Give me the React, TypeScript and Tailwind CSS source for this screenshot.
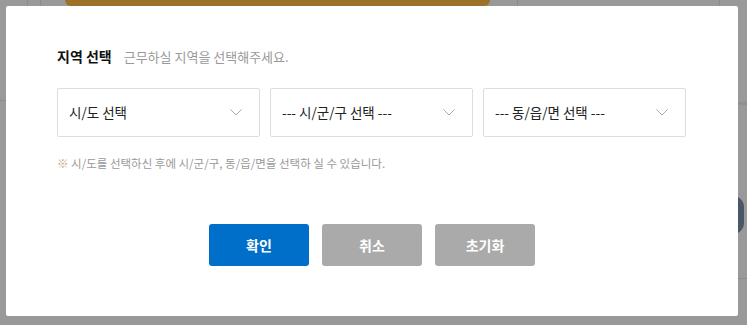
import React from "react";

const FONT = { fontFamily: '"Noto Sans CJK KR", "Noto Sans", sans-serif' };

function Chevron() {
  return (
    <svg width="12" height="7" viewBox="0 0 12 7" fill="none" className="shrink-0">
      <path d="M0.5 0.5 L6 6 L11.5 0.5" stroke="#aaaaaa" strokeWidth="1" />
    </svg>
  );
}

function SelectBox({ label }: { label: string }) {
  return (
    <div className="flex h-[49px] w-[203px] items-center justify-between rounded-[2px] border border-[#dddddd] bg-white pl-[11px] pr-[17px]">
      <span className="text-[13.5px] text-[#222222]">{label}</span>
      <Chevron />
    </div>
  );
}

export default function App() {
  return (
    <div
      className="relative h-[325px] w-[747px] overflow-hidden bg-[#999999]"
      style={FONT}
    >
      {/* 배경 페이지 (오버레이 아래) */}
      <div className="pointer-events-none absolute inset-0" aria-hidden>
        <div className="absolute left-[65px] top-0 h-[6px] w-[425px] rounded-b-[6px] bg-[#9c7228]" />
        <div className="absolute left-[27px] top-0 h-[6px] w-px bg-[#8c8c8c]" />
        <div className="absolute left-[40px] top-0 h-[6px] w-px bg-[#8c8c8c]" />
        <div className="absolute left-[517px] top-0 h-[6px] w-px bg-[#8c8c8c]" />
        <div className="absolute left-[719px] top-0 h-[6px] w-px bg-[#8c8c8c]" />
        <div className="absolute left-0 top-[100px] h-px w-[6px] bg-[#8c8c8c]" />
        <div className="absolute right-0 top-[102px] h-[3px] w-[9px] bg-[#8f8f8f]" />
        <div className="absolute right-0 top-[278px] h-px w-[9px] bg-[#8c8c8c]" />
        <div className="absolute left-[722px] top-[196px] h-[38px] w-[22px] rounded-full bg-[#4a5568]" />
      </div>

      {/* 모달 */}
      <div className="relative ml-[6px] mt-[6px] flex h-[310px] w-[732px] flex-col rounded-[2px] bg-white px-[51px] pt-[40px]">
        <div className="flex items-baseline gap-[12px]">
          <span className="text-[14px] font-bold text-[#111111]">지역 선택</span>
          <span className="text-[13px] text-[#999999]">근무하실 지역을 선택해주세요.</span>
        </div>

        <div className="mt-[21px] flex gap-[10px]">
          <SelectBox label="시/도 선택" />
          <SelectBox label="--- 시/군/구 선택 ---" />
          <SelectBox label="--- 동/읍/면 선택 ---" />
        </div>

        <p className="mt-[18px] text-[11.5px] leading-[16px] text-[#999999]">
          <span className="text-[#c9a57e]">※</span> 시/도를 선택하신 후에 시/군/구, 동/읍/면을 선택하 실 수 있습니다.
        </p>

        <div className="mt-[53px] flex justify-center gap-[13px]">
          <button className="h-[42px] w-[100px] rounded-[3px] bg-[#006fc9] text-[14px] font-bold text-white">
            확인
          </button>
          <button className="h-[42px] w-[100px] rounded-[3px] bg-[#aaaaaa] text-[14px] font-bold text-white">
            취소
          </button>
          <button className="h-[42px] w-[100px] rounded-[3px] bg-[#aaaaaa] text-[14px] font-bold text-white">
            초기화
          </button>
        </div>
      </div>
    </div>
  );
}
